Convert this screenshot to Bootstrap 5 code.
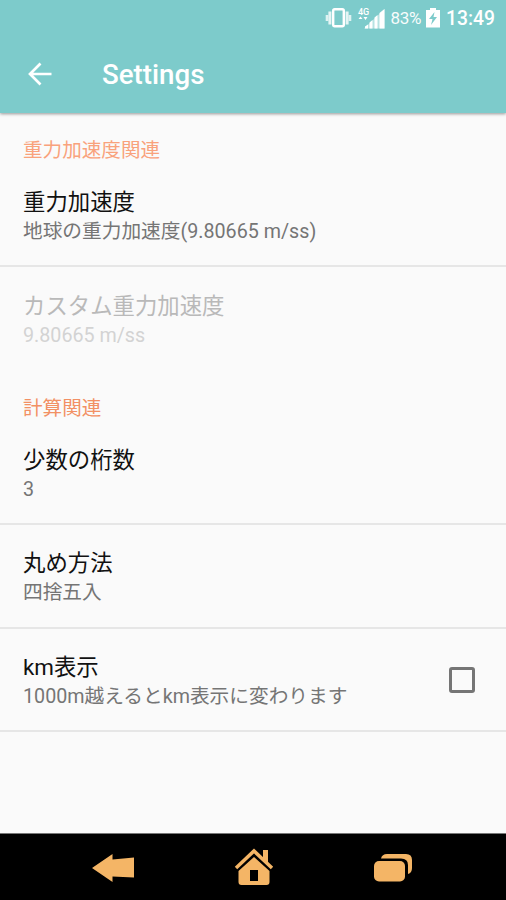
<!DOCTYPE html>
<html lang="ja">
<head>
<meta charset="utf-8">
<meta name="viewport" content="width=device-width, initial-scale=1">
<title>Settings</title>
<link href="https://cdn.jsdelivr.net/npm/bootstrap@5.3.0/dist/css/bootstrap.min.css" rel="stylesheet">
<style>
  body { font-family: Roboto, "Noto Sans CJK JP", sans-serif; background: #fafafa; color: #111; }
  .screen { height: 900px; }
  .app-header { height: 113px; background: #7dcbcb; box-shadow: 0 1px 3px rgba(0,0,0,.4); z-index: 1; }
  .status { height: 36px; padding-right: 11px; }
  .signal { margin-left: 3px; }
  .battery-text { font-size: 17px; margin-left: 5px; opacity: .95; letter-spacing: -.3px; padding-top: 1px; }
  .clock { font-size: 19.3px; font-weight: 500; margin-left: 5px; padding-top: 2px; }
  .title-bar { height: 77px; padding-left: 28px; }
  .back-arrow { margin-top: -2px; }
  .screen-title { font-size: 27.7px; font-weight: 500; margin-left: 50px; line-height: 77px; }
  .section-name { height: 51px; padding: 15px 23px 0; font-size: 19.6px; line-height: 46px; color: #f9a27c; font-weight: 400; }
  .section-name.later { color: #f29064; }
  .pref { height: 103.4px; padding: 3px 31px 0 23px; }
  .pref.ruled { border-bottom: 2px solid #e6e6e6; padding-top: 5px; }
  .pref-title { font-size: 22.4px; line-height: 29px; }
  .pref-note { font-size: 19.7px; line-height: 29px; color: #757575; }
  .off .pref-title { color: #b9b9b9; }
  .off .pref-note { color: #d3d3d3; }
  .form-check-input.box { width: 26px; height: 26px; border: 3px solid #757575; border-radius: 3px; background-color: transparent; margin: 0 0 4px; }
  .nav-keys { height: 67px; background: #000; border-top: 1px solid #777; padding-right: 3px; }
  .home-key { margin: 0 99px; }
</style>
</head>
<body>
<div class="screen d-flex flex-column overflow-hidden">
  <header class="app-header position-relative text-white flex-shrink-0">
    <div class="status d-flex align-items-center justify-content-end">
      <svg width="27" height="22" viewBox="0 0 27 22" fill="none" stroke="#fff">
        <rect x="8.200" y="2.300" width="10.600" height="17" rx="1.500" stroke-width="2.400"/>
        <path d="M4.900 4.500v13M22.100 4.500v13" stroke-width="3" opacity=".8"/>
        <path d="M2 8v6M25 8v6" stroke-width="2.600" opacity=".75"/>
      </svg>
      <svg class="signal" width="30" height="24" viewBox="0 0 30 24">
        <text x="3" y="8.500" font-size="9" font-weight="500" fill="#fff">4G</text>
        <path d="M3.500 13l2-2.500 2 2.500zM8.500 11h4l-2 3z" fill="#fff"/>
        <path d="M9 22.500L29.500 3v19.500z" fill="#fff" opacity=".45"/>
        <path d="M10 22.500v-2l3-2v4zM14.500 22.500v-6l3-2.500v8.500zM19.500 22.500v-11l3-2.500v13.500zM24.500 22.500V7l5-4v19.500z" fill="#fff"/>
      </svg>
      <span class="battery-text">83%</span>
      <svg width="16" height="22" viewBox="0 0 16 22" class="ms-1">
        <path d="M5 1h6v2h4v17.500H1V3h4z" fill="#fff"/>
        <path d="M9.500 5L4 12h3.500L6 18l6-8H8.500z" fill="#7dcbcb"/>
      </svg>
      <span class="clock">13:49</span>
    </div>
    <div class="title-bar d-flex align-items-center">
      <svg class="back-arrow" width="24" height="24" viewBox="0 0 24 24" fill="none" stroke="#fff" stroke-width="2.700"><path d="M23.500 12H3M12.500 1.500L2 12l10.500 10.500"/></svg>
      <h1 class="screen-title mb-0">Settings</h1>
    </div>
  </header>

  <main class="flex-grow-1">
    <h2 class="section-name mb-0">重力加速度関連</h2>
    <div class="pref ruled d-flex flex-column justify-content-center">
      <div class="pref-title">重力加速度</div>
      <div class="pref-note">地球の重力加速度(9.80665 m/ss)</div>
    </div>
    <div class="pref off d-flex flex-column justify-content-center">
      <div class="pref-title">カスタム重力加速度</div>
      <div class="pref-note">9.80665 m/ss</div>
    </div>
    <h2 class="section-name later mb-0">計算関連</h2>
    <div class="pref ruled d-flex flex-column justify-content-center">
      <div class="pref-title">少数の桁数</div>
      <div class="pref-note">3</div>
    </div>
    <div class="pref ruled d-flex flex-column justify-content-center">
      <div class="pref-title">丸め方法</div>
      <div class="pref-note">四捨五入</div>
    </div>
    <label class="pref ruled d-flex align-items-center justify-content-between">
      <span>
        <span class="pref-title d-block">km表示</span>
        <span class="pref-note d-block">1000m越えるとkm表示に変わります</span>
      </span>
      <input class="form-check-input box" type="checkbox">
    </label>
  </main>

  <nav class="nav-keys d-flex flex-shrink-0 align-items-center justify-content-center">
    <svg width="44" height="32" viewBox="0 0 44 32"><path d="M1 17L21.500 3v5.500L43 6.500v20L21.500 25.500V31z" fill="#f4b566"/></svg>
    <svg class="home-key" width="40" height="40" viewBox="0 0 40 40">
      <path d="M29 11V3h5v14z" fill="#f4b566"/>
      <path d="M2 21L20 4l18 17" fill="none" stroke="#f4b566" stroke-width="3.500"/>
      <path fill-rule="evenodd" d="M20 10L4.500 24v11q0 3 3 3h25q3 0 3-3V24zM16 23v11h8V23z" fill="#f4b566"/>
    </svg>
    <svg width="40" height="30" viewBox="0 0 40 30">
      <path d="M8 6.500Q9 2 14 2h19q6 0 6 6v8q0 5-4 6v-9q0-6.500-7-6.500z" fill="#f4b566"/>
      <rect x="1" y="9" width="31" height="20.500" rx="5" fill="#f4b566"/>
    </svg>
  </nav>
</div>
<script src="https://cdn.jsdelivr.net/npm/bootstrap@5.3.0/dist/js/bootstrap.bundle.min.js"></script>
</body>
</html>
